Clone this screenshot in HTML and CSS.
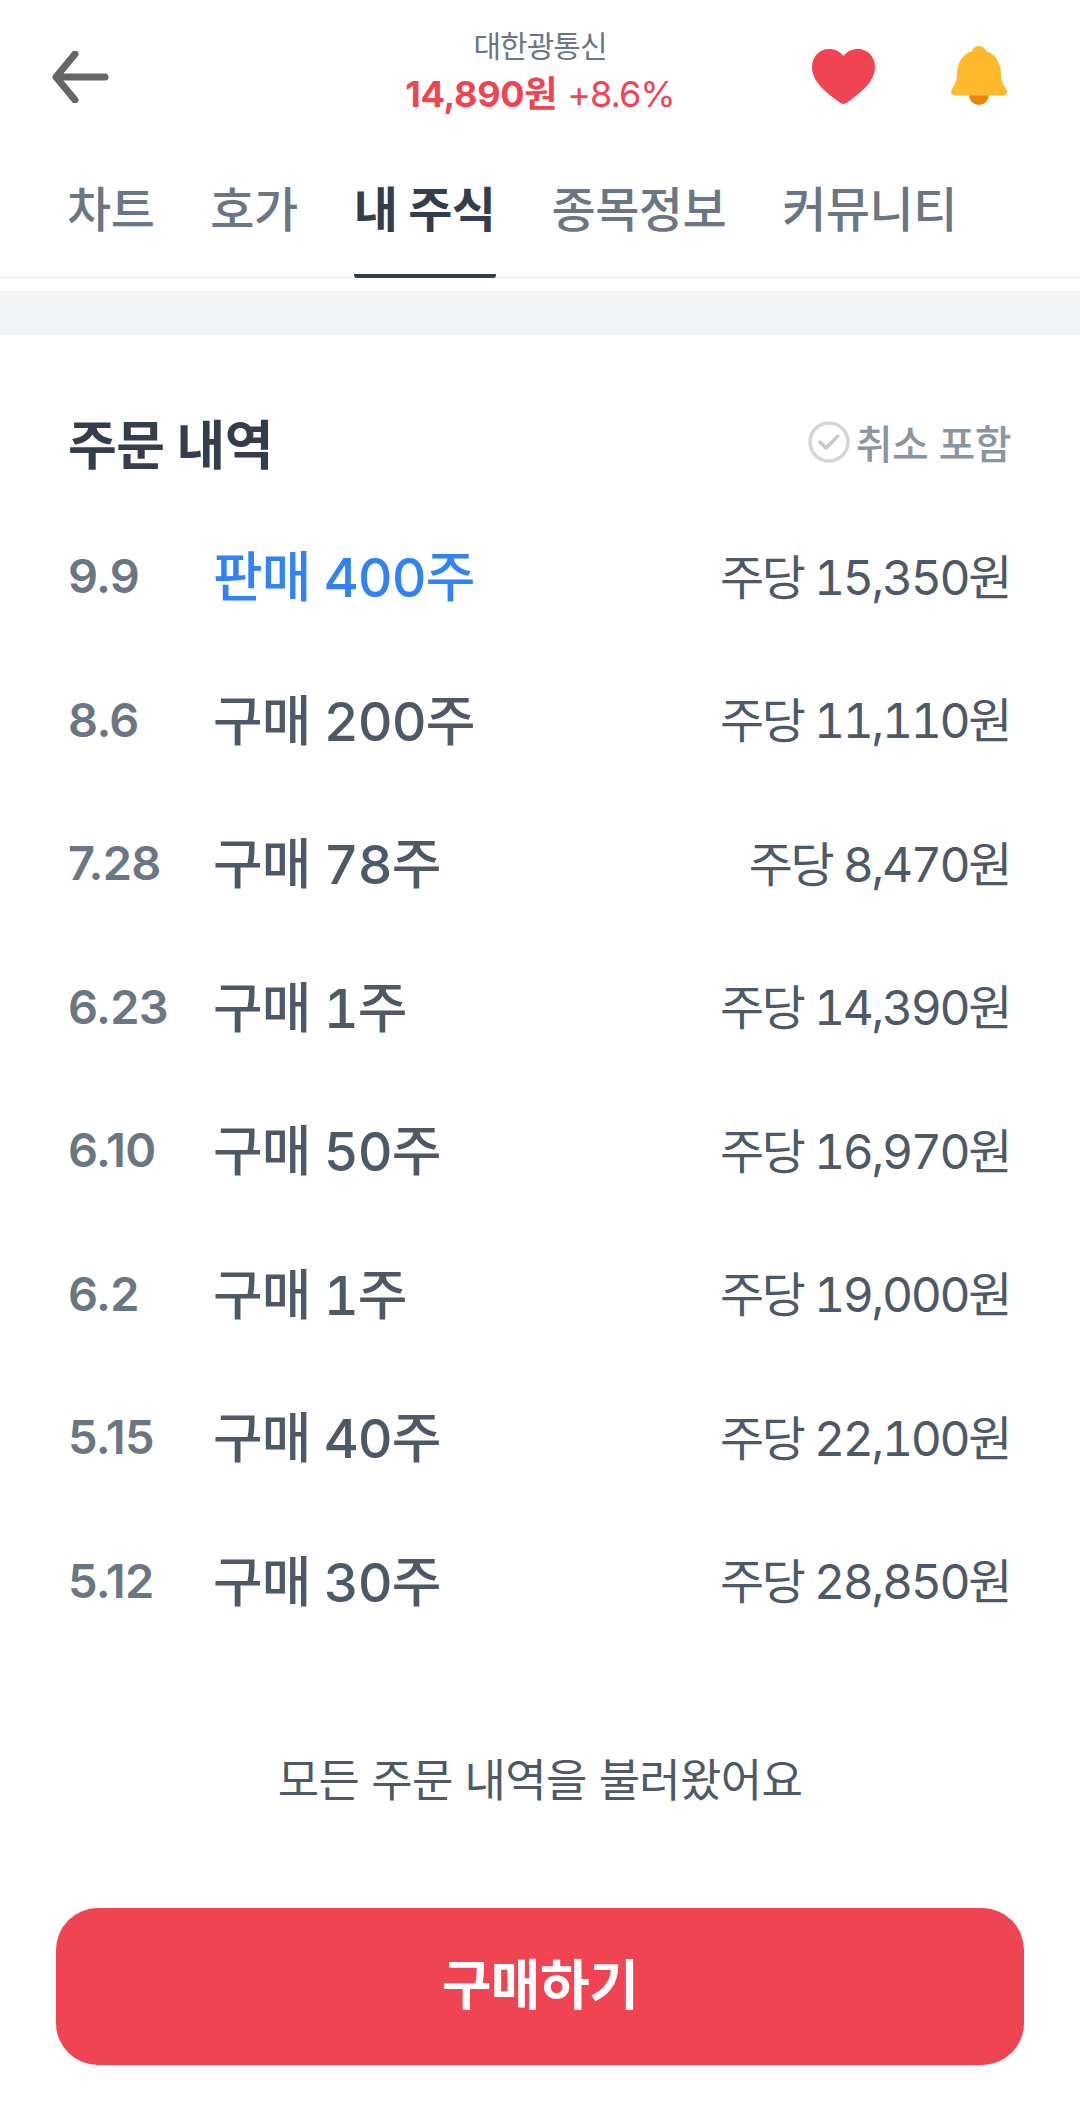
FILE: index.html
```html
<!DOCTYPE html>
<html lang="ko">
<head>
<meta charset="utf-8">
<title>내 주식</title>
<link rel="stylesheet" href="styles.css">
</head>
<body>
<div class="page">
  <header class="topbar">
    <svg class="back" width="60" height="52" viewBox="0 0 60 52"><path d="M55 26H7M25 3 6 26l19 23" fill="none" stroke="#666" stroke-width="7" stroke-linecap="round" stroke-linejoin="round"/></svg>
    <div class="stock">
      <div class="stock-name">대한광통신</div>
      <div class="stock-price"><b>14,890원</b> <span class="pct">+8.6%</span></div>
    </div>
    <div class="actions">
      <svg class="heart" width="63" height="55" viewBox="0 0 63 55"><path d="M31.500 55c-1.500 0-3-1-5-2.500C13 43 0 32 0 18 0 8 7 0 17 0c6 0 11 2.500 14.500 7C35 2.500 40 0 46 0c10 0 17 8 17 18 0 14-13 25-26.500 34.500-2 1.500-3.500 2.500-5 2.500Z" fill="#f04452"/></svg>
      <svg class="bell" width="56" height="59" viewBox="0 0 56 59"><circle cx="28" cy="49" r="10" fill="#e8860f"/><path d="M28 0c3.500 0 6 2 7 5 10 3 15 13 15 23 0 7 2 10 5 15 2 3 1 6-3 6.500H4c-4-.5-5-3.500-3-6.500 3-5 5-8 5-15C6 18 11 8 21 5c1-3 3.500-5 7-5Z" fill="#ffb92c"/></svg>
    </div>
  </header>
  <nav class="tabs">
    <a class="tab">차트</a>
    <a class="tab">호가</a>
    <a class="tab active">내 주식</a>
    <a class="tab">종목정보</a>
    <a class="tab">커뮤니티</a>
  </nav>
  <div class="band"></div>
  <section class="orders">
    <div class="orders-head">
      <h2>주문 내역</h2>
      <div class="toggle">
        <svg width="42" height="42" viewBox="0 0 42 42"><circle cx="21" cy="21" r="19" fill="none" stroke="#d1d6db" stroke-width="3.500"/><path d="m12 21 6 6 12-12" fill="none" stroke="#c4c9d0" stroke-width="3.500" stroke-linecap="round" stroke-linejoin="round"/></svg>
        <span>취소 포함</span>
      </div>
    </div>
    <ul class="list">
      <li class="row"><span class="date">9.9</span><span class="what sell">판매 400주</span><span class="per">주당 15,350원</span></li>
      <li class="row"><span class="date">8.6</span><span class="what">구매 200주</span><span class="per">주당 11,110원</span></li>
      <li class="row"><span class="date">7.28</span><span class="what">구매 78주</span><span class="per">주당 8,470원</span></li>
      <li class="row"><span class="date">6.23</span><span class="what">구매 1주</span><span class="per">주당 14,390원</span></li>
      <li class="row"><span class="date">6.10</span><span class="what">구매 50주</span><span class="per">주당 16,970원</span></li>
      <li class="row"><span class="date">6.2</span><span class="what">구매 1주</span><span class="per">주당 19,000원</span></li>
      <li class="row"><span class="date">5.15</span><span class="what">구매 40주</span><span class="per">주당 22,100원</span></li>
      <li class="row"><span class="date">5.12</span><span class="what">구매 30주</span><span class="per">주당 28,850원</span></li>
    </ul>
    <p class="end">모든 주문 내역을 불러왔어요</p>
  </section>
  <button class="buy">구매하기</button>
</div>
</body>
</html>
```
FILE: styles.css
```css
* { box-sizing: border-box; }
html, body { margin: 0; padding: 0; background: #fff; }
body { font-family: "Inter", "Noto Sans CJK KR", sans-serif; }
.page { width: 1080px; height: 2121px; display: flex; flex-direction: column; overflow: hidden; }
.topbar { height: 150px; display: flex; align-items: flex-start; justify-content: space-between; padding: 25px 73px 0 50px; position: relative; }
.back { margin-top: 26px; }
.stock { position: absolute; left: 0; top: 26px; text-align: center; width: 1080px; }
.stock-name { font-size: 30px; line-height: 40px; color: #6b7684; letter-spacing: -1px; }
.stock-price { font-size: 36px; line-height: 52px; color: #f04452; margin-top: 2px; }
.stock-price b { font-weight: 700; letter-spacing: -0.300px; }
.pct { letter-spacing: -1px; }
.actions { display: flex; gap: 76px; align-items: flex-start; position: relative; margin-top: -1px; }
.heart { margin-top: 25px; }
.bell { margin-top: 22px; }
.tabs { height: 128px; display: flex; gap: 56px; padding: 0 0 0 67px; border-bottom: 1px solid #e9ebee; }
.tab { font-size: 48px; line-height: 60px; font-weight: 500; color: #6b7684; letter-spacing: -0.500px; padding-top: 30px; height: 128px; }
.tab.active { font-weight: 700; color: #333d4b; border-bottom: 4px solid #333d4b; border-radius: 0 0 3px 3px; }
.band { height: 44px; background: #f2f4f6; margin-top: 13px; }
.orders { flex: 1; padding: 0 68px; }
.orders-head { display: flex; justify-content: space-between; align-items: center; height: 60px; margin-top: 77px; }
.orders-head h2 { margin: 0; font-size: 53px; font-weight: 700; color: #333d4b; letter-spacing: -0.500px; }
.toggle { display: flex; align-items: center; gap: 6px; padding-right: 1px; font-size: 40px; font-weight: 500; color: #8b95a1; letter-spacing: -0.500px; }
.list { list-style: none; margin: 30px 0 0; padding: 0; }
.row { height: 143.500px; display: flex; align-items: center; }
.date { width: 145px; padding-top: 4px; font-size: 47px; font-weight: 600; color: #6b7684; letter-spacing: -0.700px; }
.what { flex: 1; font-size: 54px; font-weight: 500; color: #4e5968; letter-spacing: -1px; font-variant-numeric: tabular-nums; }
.what.sell { color: #3182f6; }
.per { padding-right: 2px; font-size: 48px; color: #4e5968; letter-spacing: -2.400px; font-variant-numeric: tabular-nums; }
.end { margin: 103px 0 0; text-align: center; font-size: 45px; line-height: 56px; color: #4e5968; letter-spacing: -0.700px; }
.buy { flex: none; margin: 0 56px 56px; height: 157px; padding: 0 0 10px; border: 0; border-radius: 42px; background: #f04452; color: #fff; font: 700 54px "Inter", "Noto Sans CJK KR", sans-serif; letter-spacing: -0.500px; }
```
